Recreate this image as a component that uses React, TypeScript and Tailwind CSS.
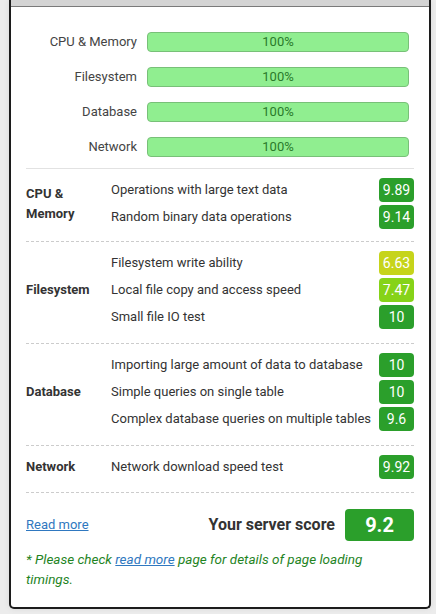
const bars = ["CPU & Memory", "Filesystem", "Database", "Network"];

type Test = { name: string; score: string; color: string };

const sections: { title: string; pb: string; tests: Test[] }[] = [
  {
    title: "CPU & Memory",
    pb: "pb-[12px]",
    tests: [
      { name: "Operations with large text data", score: "9.89", color: "bg-[#2b9f2b]" },
      { name: "Random binary data operations", score: "9.14", color: "bg-[#2b9f2b]" },
    ],
  },
  {
    title: "Filesystem",
    pb: "pb-[14px]",
    tests: [
      { name: "Filesystem write ability", score: "6.63", color: "bg-[#c6d41b]" },
      { name: "Local file copy and access speed", score: "7.47", color: "bg-[#86d318]" },
      { name: "Small file IO test", score: "10", color: "bg-[#2b9f2b]" },
    ],
  },
  {
    title: "Database",
    pb: "pb-[14px]",
    tests: [
      { name: "Importing large amount of data to database", score: "10", color: "bg-[#2b9f2b]" },
      { name: "Simple queries on single table", score: "10", color: "bg-[#2b9f2b]" },
      { name: "Complex database queries on multiple tables", score: "9.6", color: "bg-[#2b9f2b]" },
    ],
  },
  {
    title: "Network",
    pb: "pb-[13px]",
    tests: [{ name: "Network download speed test", score: "9.92", color: "bg-[#2b9f2b]" }],
  },
];

export default function App() {
  return (
    <div className="h-[614px] w-[436px] overflow-hidden bg-[#ececec] pl-[9px] font-['Roboto',sans-serif]">
      <div className="w-[422px] rounded-b-[5px] border-x-2 border-b-2 border-[#1c1c1c] bg-white shadow-[0_0_6px_rgba(0,0,0,0.08)]">
        <div className="h-[7px] border-b border-[#7a7a7a] bg-[#d4d4d4]" />

        <div className="px-[15px]">
          {/* overall bars */}
          <div className="flex flex-col gap-[15px] pb-[11px] pt-[25px]">
            {bars.map((b) => (
              <div key={b} className="flex items-center">
                <span className="w-[111px] text-right text-[13px] text-[#444]">{b}</span>
                <div className="ml-[10px] mr-[5px] flex h-[20px] flex-1 items-center justify-center rounded-[4px] border border-[#78c078] bg-[#90ee90] text-[13px] text-[#2a7a2a]">
                  100%
                </div>
              </div>
            ))}
          </div>

          <div className="border-t border-[#e2e2e2]">
            {sections.map((s) => (
              <div key={s.title} className={`flex items-center border-b border-dashed border-[#cccccc] pt-[9px] ${s.pb}`}>
                <span className="w-[85px] pr-2 text-[13px] font-bold leading-[20px] text-[#333]">{s.title}</span>
                <div className="flex flex-1 flex-col gap-[3px]">
                  {s.tests.map((t) => (
                    <div key={t.name} className="flex h-6 items-center justify-between">
                      <span className="text-[13px] text-[#333]">{t.name}</span>
                      <span
                        className={`flex h-6 w-[35px] items-center justify-center rounded-[4px] text-[14px] text-white ${t.color}`}
                      >
                        {t.score}
                      </span>
                    </div>
                  ))}
                </div>
              </div>
            ))}
          </div>

          <div className="flex items-center justify-between pt-[16px]">
            <a href="#" className="text-[13px] text-[#2f78c0] underline">
              Read more
            </a>
            <div className="flex items-center gap-[10px]">
              <span className="text-[16px] font-bold text-[#333]">Your server score</span>
              <span className="flex h-[32px] w-[69px] items-center justify-center rounded-[4px] bg-[#2b9f2b] text-[20px] font-bold text-white">
                9.2
              </span>
            </div>
          </div>

          <p className="pb-[18px] pr-[30px] pt-[8px] text-[13.5px] italic leading-[20px] text-[#1f841f]">
            * Please check{" "}
            <a href="#" className="text-[#2f78c0] underline">
              read more
            </a>{" "}
            page for details of page loading timings.
          </p>
        </div>
      </div>
    </div>
  );
}
